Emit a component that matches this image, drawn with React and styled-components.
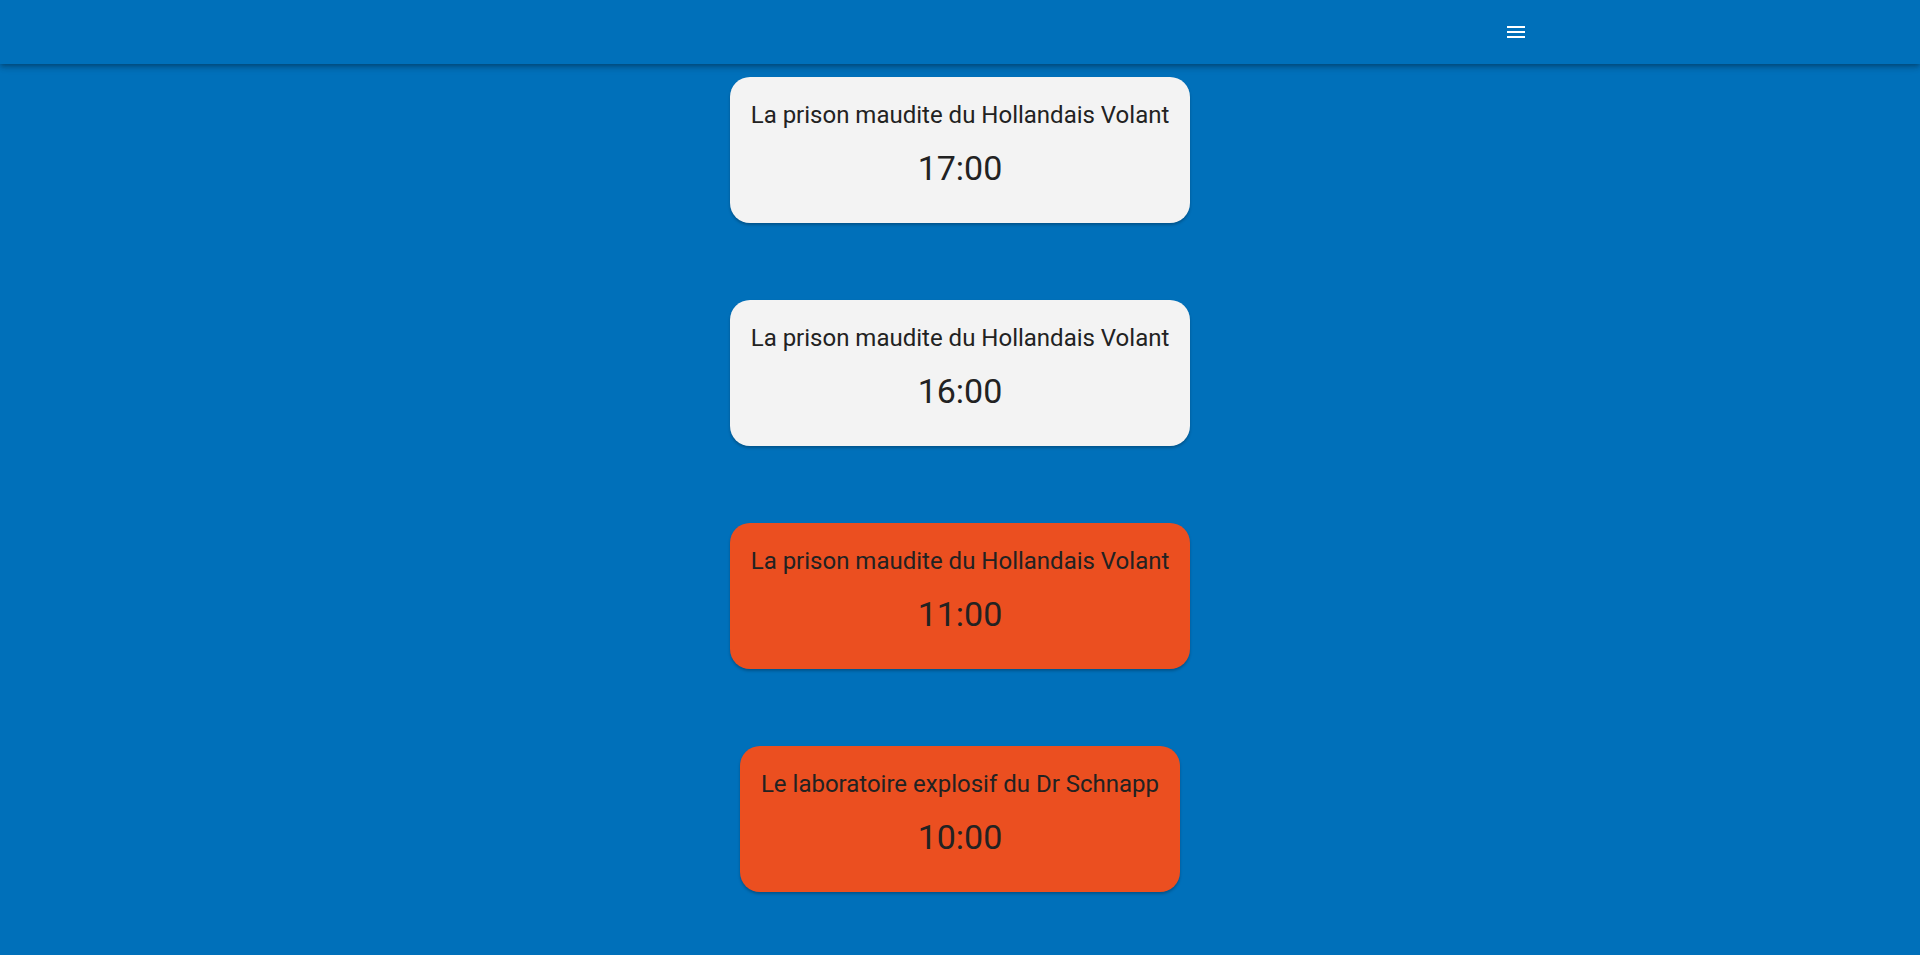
import React from 'react';
import styled, { createGlobalStyle } from 'styled-components';

const GlobalStyle = createGlobalStyle`
  html, body {
    margin: 0;
    padding: 0;
    background: #0070ba;
    font-family: Roboto, "Noto Sans", "Liberation Sans", sans-serif;
  }
`;

const Page = styled.div`
  min-height: 955px;
  background: #0070ba;
`;

const AppBar = styled.header`
  height: 64px;
  background: #0070ba;
  display: flex;
  align-items: center;
  justify-content: flex-end;
  padding-right: 392px;
  box-shadow: 0 2px 4px -1px rgba(0, 0, 0, 0.2), 0 4px 5px 0 rgba(0, 0, 0, 0.14), 0 1px 10px 0 rgba(0, 0, 0, 0.12);
  position: relative;
  z-index: 1;
`;

const MenuButton = styled.button`
  width: 24px;
  height: 24px;
  padding: 0;
  border: none;
  background: none;
  color: #fff;
  display: flex;
  cursor: pointer;
`;

const List = styled.main`
  display: flex;
  flex-direction: column;
  align-items: center;
  gap: 77px;
  padding-top: 13px;
`;

const Card = styled.div`
  display: flex;
  flex-direction: column;
  align-items: center;
  gap: 16px;
  padding: 22px 21px 34px;
  border-radius: 20px;
  background: ${(p) => (p.$late ? '#eb4f20' : '#f3f3f3')};
  color: #222;
  box-shadow: 0 2px 3px rgba(0, 0, 0, 0.25);
`;

const Title = styled.div`
  font-size: 24px;
  line-height: 32px;
  font-weight: 400;
  white-space: nowrap;
`;

const Time = styled.div`
  font-size: 34px;
  line-height: 42px;
  font-weight: 400;
`;

const MenuIcon = () => (
  <svg width="24" height="24" viewBox="0 0 24 24" fill="currentColor">
    <path d="M3 18h18v-2H3v2zm0-5h18v-2H3v2zm0-7v2h18V6H3z" />
  </svg>
);

const sessions = [
  { title: 'La prison maudite du Hollandais Volant', time: '17:00', late: false },
  { title: 'La prison maudite du Hollandais Volant', time: '16:00', late: false },
  { title: 'La prison maudite du Hollandais Volant', time: '11:00', late: true },
  { title: 'Le laboratoire explosif du Dr Schnapp', time: '10:00', late: true },
];

export default function App() {
  return (
    <Page>
      <GlobalStyle />
      <AppBar>
        <MenuButton aria-label="menu">
          <MenuIcon />
        </MenuButton>
      </AppBar>
      <List>
        {sessions.map((s, i) => (
          <Card key={i} $late={s.late}>
            <Title>{s.title}</Title>
            <Time>{s.time}</Time>
          </Card>
        ))}
      </List>
    </Page>
  );
}
